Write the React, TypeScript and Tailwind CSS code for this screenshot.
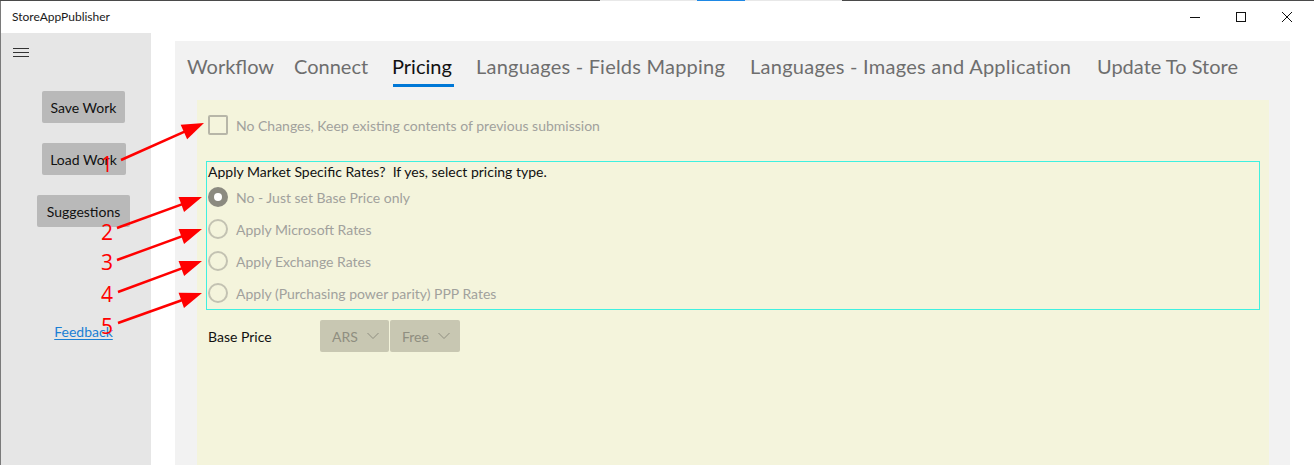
import React from "react";

// tab label + slot width (label width plus the gap that follows it)
const tabs: [string, string][] = [
  ["Workflow", "w-[107px]"],
  ["Connect", "w-[98px]"],
  ["Pricing", "w-[84px]"],
  ["Languages - Fields Mapping", "w-[274px] tracking-[0.22px]"],
  ["Languages - Images and Application", "w-[347px] tracking-[0.26px]"],
  ["Update To Store", "w-[141px]"],
];

const radios = [
  "No - Just set Base Price only",
  "Apply Microsoft Rates",
  "Apply Exchange Rates",
  "Apply (Purchasing power parity) PPP Rates",
];

// callouts drawn over the screenshot: number, number position, arrow start, arrow tip
const callouts = [
  { n: "1", tx: 101, ty: 172, x1: 121, y1: 160, x2: 204, y2: 123 },
  { n: "2", tx: 101, ty: 240, x1: 117, y1: 228, x2: 202, y2: 197 },
  { n: "3", tx: 101, ty: 270, x1: 117, y1: 260, x2: 202, y2: 229 },
  { n: "4", tx: 101, ty: 302, x1: 118, y1: 292, x2: 202, y2: 261 },
  { n: "5", tx: 101, ty: 334, x1: 118, y1: 323, x2: 202, y2: 293 },
];

function Arrow({ x1, y1, x2, y2 }: { x1: number; y1: number; x2: number; y2: number }) {
  const dx = x2 - x1;
  const dy = y2 - y1;
  const len = Math.hypot(dx, dy);
  const ux = dx / len;
  const uy = dy / len;
  const headLen = 22;
  const headW = 8;
  const bx = x2 - ux * headLen;
  const by = y2 - uy * headLen;
  const pts = `${x2},${y2} ${bx - uy * headW},${by + ux * headW} ${bx + uy * headW},${by - ux * headW}`;
  return (
    <g>
      <line x1={x1} y1={y1} x2={bx + ux * 2} y2={by + uy * 2} stroke="#ff0000" strokeWidth={2.5} />
      <polygon points={pts} fill="#ff0000" />
    </g>
  );
}

function Chevron() {
  return (
    <svg width="12" height="8" viewBox="0 0 12 8" fill="none" className="ml-auto">
      <path d="M0.5 1 L6 6.5 L11.5 1" stroke="#8f8e80" strokeWidth="1" />
    </svg>
  );
}

export default function App() {
  return (
    <div className="relative h-[465px] w-[1314px] overflow-hidden bg-white font-['Lato','Liberation_Sans',sans-serif] text-[14px]">
      {/* taskbar strip peeking above the window */}
      <div className="flex h-px">
        <div className="w-[600px] bg-[#4a4a4a]" />
        <div className="w-[97px] bg-[#e8e8e8]" />
        <div className="w-[48px] bg-[#1e88e5]" />
        <div className="w-[97px] bg-[#e8e8e8]" />
        <div className="flex-1 bg-[#4a4a4a]" />
      </div>

      <div className="flex h-[464px] flex-col border-l border-[#7a7a7a]">
        {/* title bar */}
        <div className="flex h-[32px] shrink-0 items-center">
          <span className="pl-[11px] text-[12px] text-[#1a1a1a]">StoreAppPublisher</span>
          <div className="ml-auto flex h-full items-center">
            <div className="flex h-full w-[46px] items-center justify-center">
              <svg width="10" height="10" viewBox="0 0 10 10">
                <path d="M0 5.5 H10" stroke="#111" strokeWidth="1" />
              </svg>
            </div>
            <div className="flex h-full w-[46px] items-center justify-center">
              <svg width="10" height="10" viewBox="0 0 10 10">
                <rect x="0.5" y="0.5" width="9" height="9" fill="none" stroke="#111" strokeWidth="1" />
              </svg>
            </div>
            <div className="mr-[4px] flex h-full w-[46px] items-center justify-center">
              <svg width="10" height="10" viewBox="0 0 10 10">
                <path d="M0 0 L10 10 M10 0 L0 10" stroke="#111" strokeWidth="1" />
              </svg>
            </div>
          </div>
        </div>

        <div className="flex flex-1">
          {/* nav pane */}
          <div className="flex w-[150px] shrink-0 flex-col bg-[#e6e6e6]">
            <div className="flex h-[40px] items-start pl-[12px] pt-[15px]">
              <svg width="16" height="10" viewBox="0 0 16 10">
                <path d="M0 0.5 H16 M0 4.5 H16 M0 8.5 H16" stroke="#333" strokeWidth="1" />
              </svg>
            </div>
            <div className="flex flex-col items-center gap-[20px] pl-[15px] pt-[18px]">
              <button className="h-[32px] w-[83px] rounded-[2px] bg-[#b9b9b9] text-[#111]">Save Work</button>
              <button className="h-[32px] w-[84px] rounded-[2px] bg-[#b9b9b9] text-[#111]">Load Work</button>
              <button className="h-[32px] w-[93px] rounded-[2px] bg-[#b9b9b9] text-[#111]">Suggestions</button>
            </div>
            <div className="flex justify-center pl-[15px] pt-[94px]">
              <a className="text-[#1a7fd4] underline underline-offset-2">Feedback</a>
            </div>
          </div>

          {/* main area */}
          <div className="ml-[24px] mt-[8px] flex w-[1115px] flex-col bg-[#f2f2f2]">
            <div className="flex h-[59px] shrink-0 items-start pl-[12px] pt-[11px] text-[20px] text-[#6e6e6e]">
              {tabs.map(([t, w]) => (
                <div key={t} className={`flex shrink-0 flex-col items-start ${w}`}>
                  <span className={t === "Pricing" ? "whitespace-nowrap leading-[28px] text-[#111]" : "whitespace-nowrap leading-[28px]"}>
                    {t}
                  </span>
                  {t === "Pricing" && <div className="ml-px mt-[4px] h-[3px] w-[61px] bg-[#0078d7]" />}
                </div>
              ))}
            </div>

            <div className="ml-[22px] mr-[21px] flex flex-1 flex-col bg-[#f4f4dc] px-[9px] pt-[15px]">
              <div className="ml-[2px] flex h-[20px] items-center gap-[8px]">
                <div className="h-[20px] w-[20px] rounded-[2px] border-2 border-[#b7b6a8]" />
                <span className="text-[#a1a19c]">No Changes, Keep existing contents of previous submission</span>
              </div>

              <div className="mt-[26px] flex flex-col border border-[#3ef0e0]">
                <div className="flex h-[19px] items-center whitespace-pre pl-[1px] text-[#111]">
                  Apply Market Specific Rates?  If yes, select pricing type.
                </div>
                {radios.map((r, i) => (
                  <div key={r} className="flex h-[32px] items-center gap-[8px] pl-[1px]">
                    {i === 0 ? (
                      <div className="flex h-[20px] w-[20px] items-center justify-center rounded-full bg-[#8b8a80]">
                        <div className="h-[8px] w-[8px] rounded-full bg-white" />
                      </div>
                    ) : (
                      <div className="h-[20px] w-[20px] rounded-full border-2 border-[#c3c2b2]" />
                    )}
                    <span className="text-[#a1a19c]">{r}</span>
                  </div>
                ))}
              </div>

              <div className="ml-[2px] mt-[10px] flex h-[32px] items-center">
                <span className="w-[112px] text-[#111]">Base Price</span>
                <div className="flex gap-px">
                  <div className="flex h-[32px] w-[69px] items-center rounded-[2px] bg-[#c8c7b2] pl-[12px] pr-[10px] text-[#8f8e80]">
                    <span>ARS</span>
                    <Chevron />
                  </div>
                  <div className="flex h-[32px] w-[70px] items-center rounded-[2px] bg-[#c8c7b2] pl-[12px] pr-[10px] text-[#8f8e80]">
                    <span>Free</span>
                    <Chevron />
                  </div>
                </div>
              </div>
            </div>
          </div>
        </div>
      </div>

      {/* red annotation arrows */}
      <svg className="pointer-events-none absolute left-0 top-0" width="1314" height="465">
        {callouts.map((c) => (
          <g key={c.n}>
            <Arrow x1={c.x1} y1={c.y1} x2={c.x2} y2={c.y2} />
            <text x={c.tx} y={c.ty} fill="#ff0000" fontSize="21" fontFamily="'Open Sans', 'Liberation Sans', sans-serif">
              {c.n}
            </text>
          </g>
        ))}
      </svg>
    </div>
  );
}
